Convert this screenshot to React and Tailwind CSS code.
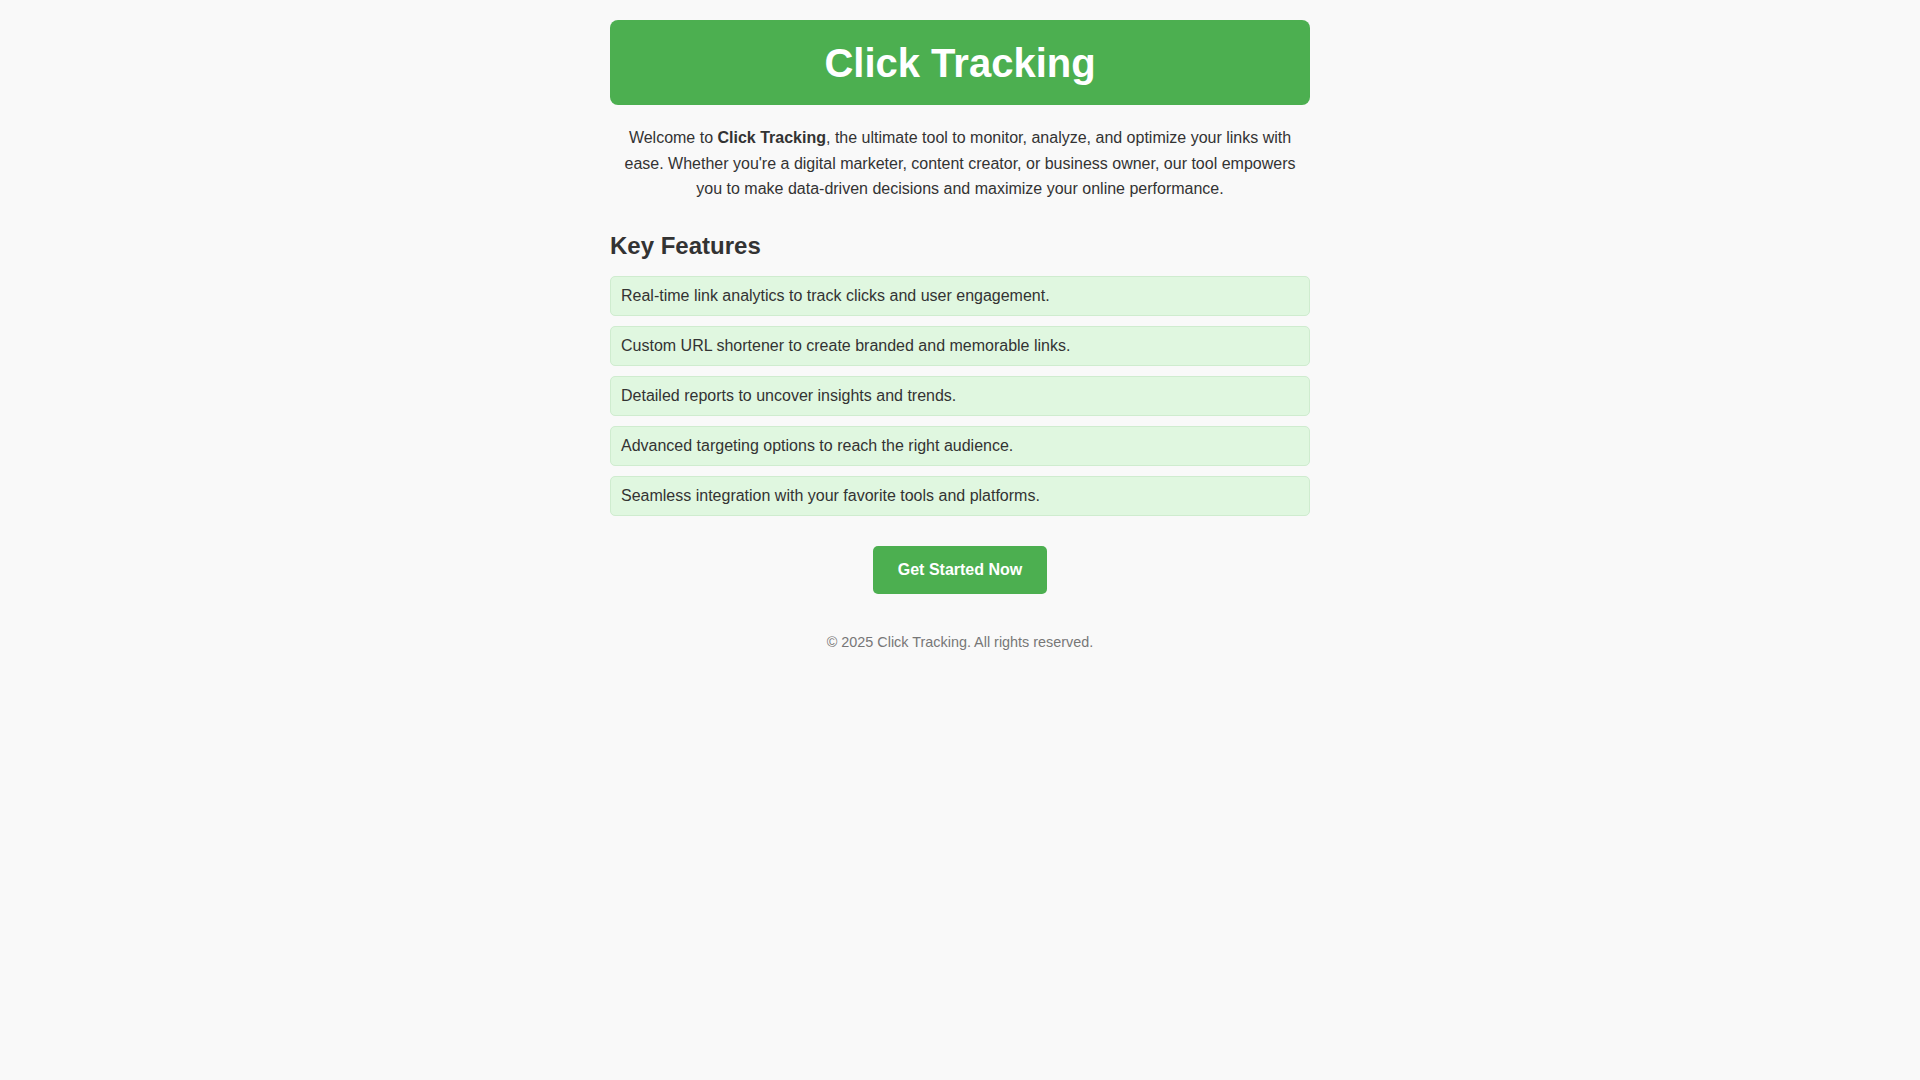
const features = [
  'Real-time link analytics to track clicks and user engagement.',
  'Custom URL shortener to create branded and memorable links.',
  'Detailed reports to uncover insights and trends.',
  'Advanced targeting options to reach the right audience.',
  'Seamless integration with your favorite tools and platforms.',
];

export default function App() {
  return (
    <div className="min-h-screen bg-[#f9f9f9] font-['Liberation_Sans',Arial,sans-serif] text-[#333]">
      <div className="mx-auto w-[700px] pt-5">
        <header className="flex h-[85px] items-center justify-center rounded-lg bg-[#4CAF50]">
          <h1 className="text-[40px] font-bold leading-[46px] text-white">Click Tracking</h1>
        </header>

        <p className="mt-5 text-center text-base leading-[25.6px]">
          Welcome to <strong>Click Tracking</strong>, the ultimate tool to monitor, analyze, and
          optimize your links with ease. Whether you're a digital marketer, content creator, or
          business owner, our tool empowers you to make data-driven decisions and maximize your
          online performance.
        </p>

        <h2 className="mt-[30px] text-2xl font-bold leading-[28px]">Key Features</h2>

        <ul className="mt-[16px] flex flex-col gap-[10px]">
          {features.map((f) => (
            <li
              key={f}
              className="flex h-[40px] items-center rounded-[5px] border border-[#cfeccf] bg-[#e0f7e0] px-[10px] text-base"
            >
              {f}
            </li>
          ))}
        </ul>

        <div className="mt-[30px] flex justify-center">
          <button className="h-[48px] w-[174px] rounded-[5px] bg-[#4CAF50] text-base font-bold text-white">
            Get Started Now
          </button>
        </div>

        <footer className="mt-[37px] text-center text-[14.4px] leading-[23px] text-[#777]">
          © 2025 Click Tracking. All rights reserved.
        </footer>
      </div>
    </div>
  );
}
